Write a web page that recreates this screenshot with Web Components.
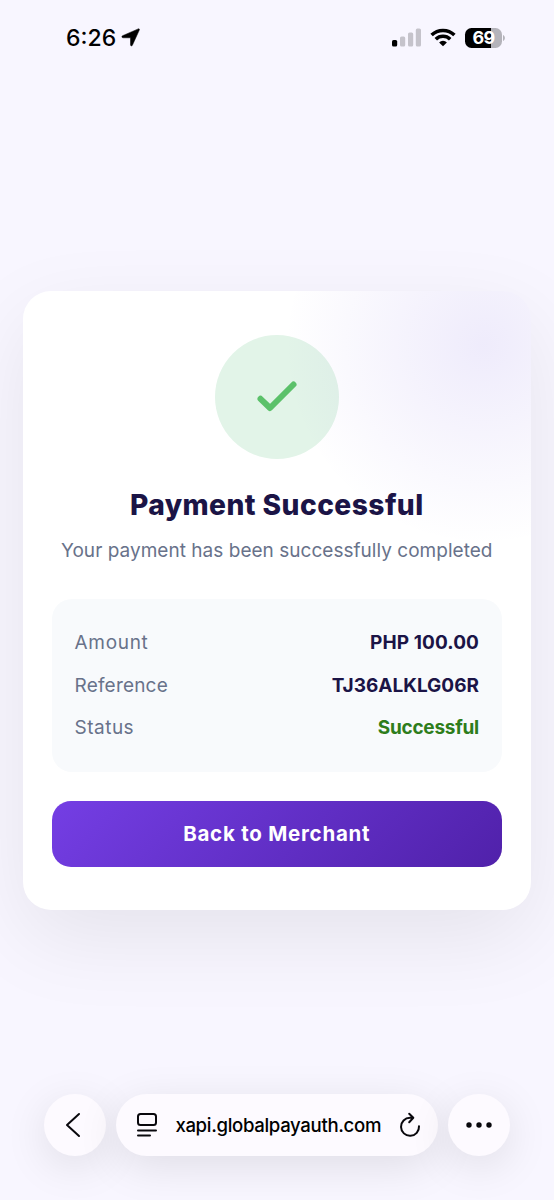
<!DOCTYPE html>
<html lang="en">
<head>
<meta charset="utf-8">
<meta name="viewport" content="width=device-width, initial-scale=1">
<title>Payment Successful</title>
<style>
html,body{margin:0;height:100%}
body{background:#f8f6ff;font-family:Inter,"Liberation Sans",sans-serif;overflow:hidden}
</style>
</head>
<body>
<phone-screen>
  <status-bar slot="top">6:26</status-bar>
  <payment-card>
    <result-badge slot="badge"></result-badge>
    <span slot="title">Payment Successful</span>
    <span slot="message">Your payment has been successfully completed</span>
    <detail-row label="Amount" style="--label-track:.7px;--track:.1px">PHP 100.00</detail-row>
    <detail-row label="Reference" style="--label-track:.2px;--track:0px">TJ36ALKLG06R</detail-row>
    <detail-row label="Status" style="--label-track:.5px;--track:-.25px;--value:#2e7d1b">Successful</detail-row>
    <action-button slot="action">Back to Merchant</action-button>
  </payment-card>
  <browser-bar slot="bottom">xapi.globalpayauth.com</browser-bar>
</phone-screen>
<script>
const define = (name, html) => customElements.define(name, class extends HTMLElement {
  connectedCallback() {
    if (this.shadowRoot) return;
    const t = document.createElement('template');
    t.innerHTML = html;
    this.attachShadow({mode: 'open'}).append(t.content.cloneNode(true));
    this.shadowRoot.querySelectorAll('[data-attr]').forEach(n => n.textContent = this.getAttribute(n.dataset.attr));
  }
});

define('phone-screen', `
<style>
:host{display:flex;flex-direction:column;height:1200px;box-sizing:border-box;background:#f8f6ff}
main{flex:1;padding:216px 23.500px 0 23px}
</style>
<slot name="top"></slot><main><slot></slot></main><slot name="bottom"></slot>`);

define('status-bar', `
<style>
:host{display:flex;align-items:center;height:75px;box-sizing:border-box;padding:0 48px 0 66px;color:#000}
.time{font-size:23px;font-weight:500;line-height:28px}
svg{display:block}
.loc{margin-left:5px}
.right{margin-left:auto;display:flex;align-items:center}
.wifi{margin-left:9px}
.bat{margin-left:9px;width:37px;height:20px;border-radius:6.500px;display:flex;align-items:center;justify-content:center;background:linear-gradient(90deg,#000 0 26px,#b4b3ba 26px);color:#fff;font-size:18px;font-weight:700;line-height:20px;letter-spacing:-.6px}
</style>
<span class="time"><slot></slot></span>
<svg class="loc" width="19" height="19" viewBox="0 0 19 19"><path d="M17.200.9c.9-.4 1.500.4 1.100 1.200L11.400 17.200c-.5 1.100-1.900.9-1.900-.4V9.800H2.200C.6 9.800.4 8.200 1.600 7.700Z" stroke="#000" stroke-width=".5"/></svg>
<div class="right">
<svg width="29" height="19" viewBox="0 0 29 19"><rect x="0" y="12" width="5.200" height="6.500" rx="1.600"/><g fill="#c5c3cb"><rect x="8" y="8.500" width="5.200" height="10" rx="1.600"/><rect x="16" y="4.500" width="5.200" height="14" rx="1.600"/><rect x="23.800" y="0.500" width="5.200" height="18" rx="1.600"/></g></svg>
<svg class="wifi" width="26" height="19" viewBox="0 0 26 19"><g fill="none" stroke="#000" stroke-width="3.500"><path d="M1.600 7.100a16.200 16.200 0 0 1 22.800 0"/><path d="M5.800 11.300a10.200 10.200 0 0 1 14.400 0"/></g><path d="M13 18.300 9.100 14.400a5.500 5.500 0 0 1 7.800 0Z"/></svg>
<div class="bat">69</div>
<svg width="4" height="8" viewBox="0 0 4 8"><path d="M1 1c2.500 1 2.500 5 0 6Z" fill="#b4b3ba"/></svg>
</div>`);

define('payment-card', `
<style>
:host{display:flex;flex-direction:column;align-items:center;position:relative;height:619px;box-sizing:border-box;padding:44px 28.500px 0;border-radius:28px;background:#fff;box-shadow:0 28px 85px rgba(0,0,0,.08)}
.glow{position:absolute;inset:0;border-radius:inherit;pointer-events:none;background:radial-gradient(circle 285px at 461px 54px,rgba(94,62,220,.1),rgba(94,62,220,0) 70%)}
h1{margin:28px 0 0;font-size:28.200px;line-height:36px;font-weight:800;letter-spacing:.43px;color:#1b1446;white-space:nowrap}
p{margin:13.500px 0 0;font-size:19px;line-height:28px;letter-spacing:.03px;color:#68728a;white-space:nowrap}
.details{width:100%;box-sizing:border-box;margin-top:34.500px;height:173px;padding:22.500px 23px 0;border-radius:20px;background:#f8fafc}
.action{width:100%;margin-top:29px}
</style>
<slot name="badge"></slot>
<h1><slot name="title"></slot></h1>
<p><slot name="message"></slot></p>
<div class="details"><slot></slot></div>
<div class="action"><slot name="action"></slot></div>
<div class="glow"></div>`);

define('result-badge', `
<style>
:host{display:grid;place-items:center;width:124px;height:124px;border-radius:50%;background:#e2f4e8}
</style>
<svg width="44" height="36" viewBox="0 0 44 36" fill="none" stroke="#5bc16a" stroke-width="6" stroke-linecap="round" stroke-linejoin="round"><path d="M5.500 19.800 15 29 38.500 5.500"/></svg>`);

define('detail-row', `
<style>
:host{display:flex;justify-content:space-between;align-items:center;height:42.500px;font-size:19px}
.label{color:#68728a;letter-spacing:var(--label-track)}
.value{color:var(--value,#1b1446);font-weight:700;letter-spacing:var(--track)}
</style>
<span class="label" data-attr="label"></span><span class="value"><slot></slot></span>`);

define('action-button', `
<style>
:host{display:block}
button{display:block;width:100%;height:65.500px;border:0;padding:0;border-radius:19px;background:linear-gradient(135deg,#743ee4,#5021aa);color:#fff;font:700 20.500px/65px Inter,"Liberation Sans",sans-serif;letter-spacing:.75px}
</style>
<button><slot></slot></button>`);

define('browser-bar', `
<style>
:host{display:flex;gap:10px;height:106px;padding:0 44px 0 43.500px}
.pill{height:62px;border-radius:31px;background:#fdfaff;box-shadow:0 10px 44px rgba(0,0,0,.1);display:flex;align-items:center;justify-content:center;box-sizing:border-box}
.round{width:62px;flex:none}
.address{flex:1;justify-content:space-between;padding:0 17px 0 20px;color:#000;font-size:18.600px;font-weight:500;letter-spacing:-.33px}
svg{display:block;fill:none;stroke:#09080d;stroke-width:2;stroke-linecap:round;stroke-linejoin:round}
</style>
<div class="pill round"><svg width="16" height="26" viewBox="0 0 16 26" style="margin-right:3px"><path d="M14 2 2 13 14 24"/></svg></div>
<div class="pill address">
<svg width="22" height="26" viewBox="0 0 22 26"><rect x="2" y="2" width="18" height="11" rx="2.500"/><path d="M2 18.500H20M2 23.500H14"/></svg>
<span><slot></slot></span>
<svg width="22" height="26" viewBox="0 0 22 26"><path d="M14 5.800H11A9 9 0 1 0 20 14.200M10.200 1.700 14.300 5.800 10.200 10.200"/></svg>
</div>
<div class="pill round"><svg width="28" height="6" viewBox="0 0 28 6" style="fill:#09080d;stroke:none"><circle cx="4" cy="3" r="2.700"/><circle cx="14" cy="3" r="2.700"/><circle cx="24" cy="3" r="2.700"/></svg></div>`);
</script>
</body>
</html>
